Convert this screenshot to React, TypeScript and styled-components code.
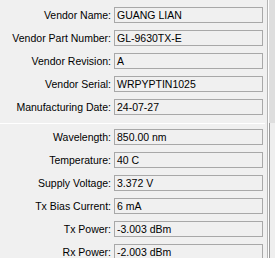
import React from "react";
import styled, { createGlobalStyle } from "styled-components";

const Global = createGlobalStyle`
  html, body { margin: 0; padding: 0; background: #f0f0f0; overflow: hidden; }
  body { font-family: "Liberation Sans", Arial, sans-serif; font-size: 10.5px; color: #000; }
`;

const Window = styled.div`
  display: flex;
  width: 275px;
  height: 258px;
  overflow: hidden;
  background: #f0f0f0;
`;

const Panel = styled.div`
  width: 267px;
  flex: none;
  display: flex;
  flex-direction: column;
`;

const Group = styled.div`
  display: grid;
  grid-template-columns: 111px 149px;
  grid-auto-rows: 16px;
  column-gap: 3px;
  row-gap: 7px;
  padding-top: ${(p: { $top: number }) => p.$top}px;
`;

const Label = styled.div`
  text-align: right;
  line-height: 17px;
  white-space: nowrap;
`;

const Field = styled.div`
  box-sizing: border-box;
  height: 16px;
  border: 1px solid #a8a8a8;
  background: #f0f0f0;
  padding-left: 2px;
  line-height: 15px;
  white-space: nowrap;
  overflow: hidden;
`;

const Separator = styled.div`
  width: 265px;
  height: 1px;
  margin: 8px 0 5px;
  background: #a0a0a0;
  border-bottom: 1px solid #ffffff;
`;

const ScrollStrip = styled.div`
  flex: 1;
  display: flex;
  flex-direction: column;
  border-left: 1px solid #b4b4b4;
  box-shadow: inset 1px 0 0 #ffffff;
`;

const Track = styled.div`
  height: 123px;
  margin-left: 1px;
  background: #dedede;
`;

const Thumb = styled.div`
  flex: 1;
  margin-left: 1px;
  border-left: 1px solid #9a9a9a;
  background: #eeeeee;
`;

const vendor: [string, string][] = [
  ["Vendor Name:", "GUANG LIAN"],
  ["Vendor Part Number:", "GL-9630TX-E"],
  ["Vendor Revision:", "A"],
  ["Vendor Serial:", "WRPYPTIN1025"],
  ["Manufacturing Date:", "24-07-27"],
];

const diag: [string, string][] = [
  ["Wavelength:", "850.00 nm"],
  ["Temperature:", "40 C"],
  ["Supply Voltage:", "3.372 V"],
  ["Tx Bias Current:", "6 mA"],
  ["Tx Power:", "-3.003 dBm"],
  ["Rx Power:", "-2.003 dBm"],
];

const Rows = ({ items }: { items: [string, string][] }) => (
  <>
    {items.map(([l, v]) => (
      <React.Fragment key={l}>
        <Label>{l}</Label>
        <Field>{v}</Field>
      </React.Fragment>
    ))}
  </>
);

export default function App() {
  return (
    <>
      <Global />
      <Window>
        <Panel>
          <Group $top={7}>
            <Rows items={vendor} />
          </Group>
          <Separator />
          <Group $top={0}>
            <Rows items={diag} />
          </Group>
        </Panel>
        <ScrollStrip>
          <Track />
          <Thumb />
        </ScrollStrip>
      </Window>
    </>
  );
}
